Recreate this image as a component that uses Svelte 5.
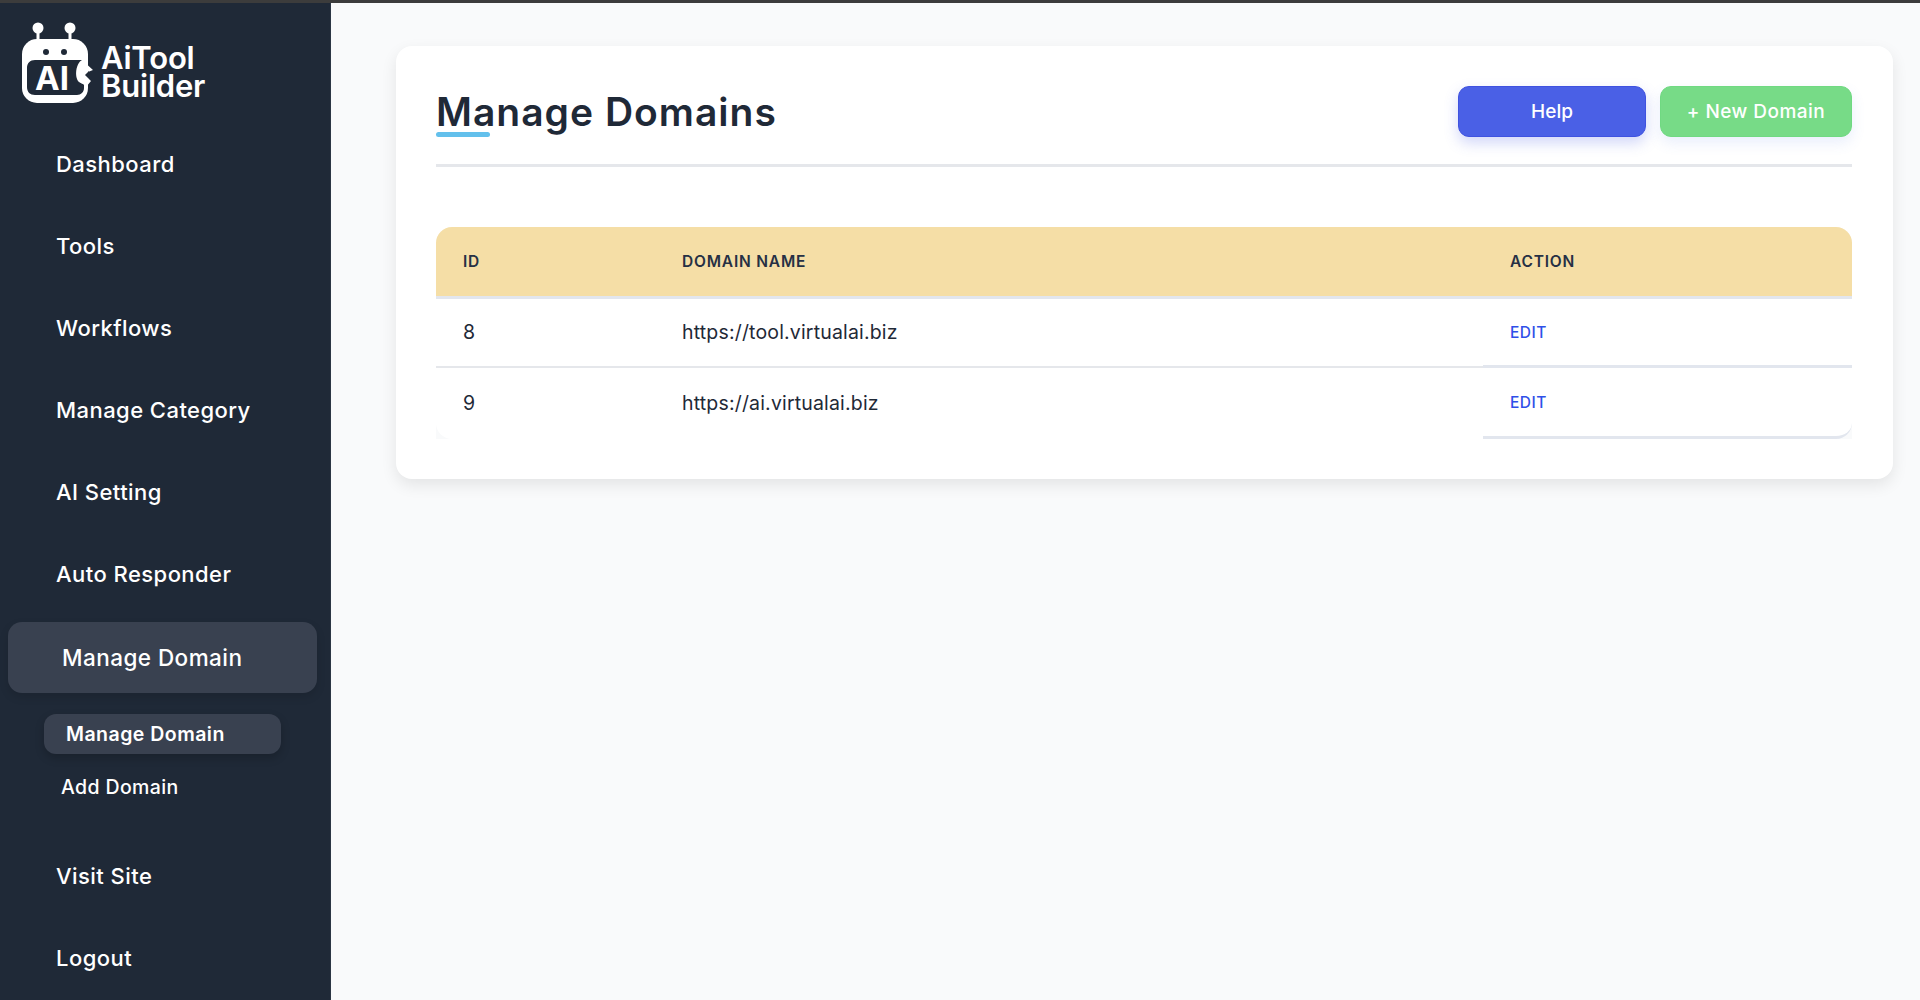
<script>
  const topNav = ['Dashboard', 'Tools', 'Workflows', 'Manage Category', 'AI Setting', 'Auto Responder'];
  const domains = [
    { id: 8, name: 'https://tool.virtualai.biz' },
    { id: 9, name: 'https://ai.virtualai.biz' }
  ];
</script>

<div class="page">
  <div class="topbar"></div>
  <div class="shell">
    <aside class="sidebar">
      <div class="brand">
        <svg class="mark" viewBox="0 0 74 80" width="74" height="80" aria-hidden="true">
          <circle cx="16" cy="5" r="5.5" fill="#fff" />
          <circle cx="48" cy="5" r="5.5" fill="#fff" />
          <rect x="14.5" y="7" width="3" height="12" fill="#fff" />
          <rect x="46.5" y="7" width="3" height="12" fill="#fff" />
          <rect x="0" y="16" width="66" height="64" rx="15" fill="#fff" />
          <circle cx="24" cy="29" r="3" fill="#1f2937" />
          <circle cx="42" cy="29" r="3" fill="#1f2937" />
          <path d="M13 37 H60 C54 40 52 54 57 59 C60 61 62 61 62 62 V65 C62 69 59 72 55 72 H13 C8 72 5 69 5 64 V45 C5 40 8 37 13 37 Z" fill="#1f2937" />
          <path d="M60 37 L71 47 L66 49 L66 37 Z" fill="#fff" />
          <path d="M67 48 L63 52 L67 56 Z" fill="#1f2937" />
          <path d="M66 55 L69 58 L64 64 L66 64 Z" fill="#fff" />
          <text x="13" y="67" class="mark-text">AI</text>
        </svg>
        <div class="brand-name">AiTool Builder</div>
      </div>
      <nav class="nav">
        {#each topNav as item}
          <a class="nav-item" href="#top">{item}</a>
        {/each}
        <a class="nav-active" href="#top">Manage Domain</a>
        <div class="subnav">
          <a class="sub-active" href="#top">Manage Domain</a>
          <a class="sub-item" href="#top">Add Domain</a>
        </div>
        <a class="nav-item" href="#top">Visit Site</a>
        <a class="nav-item" href="#top">Logout</a>
      </nav>
    </aside>
    <main class="main">
      <section class="card">
        <header class="head">
          <h1>Manage Domains</h1>
          <div class="actions">
            <button class="btn help">Help</button>
            <button class="btn add">+ New Domain</button>
          </div>
        </header>
        <div class="table-wrap">
          <table>
            <colgroup>
              <col class="c1" /><col class="c2" /><col class="c3" />
            </colgroup>
            <thead>
              <tr><th>ID</th><th>DOMAIN NAME</th><th>ACTION</th></tr>
            </thead>
            <tbody>
              {#each domains as d}
                <tr>
                  <td>{d.id}</td>
                  <td>{d.name}</td>
                  <td class="act"><a href="#top">EDIT</a></td>
                </tr>
              {/each}
            </tbody>
          </table>
        </div>
      </section>
    </main>
  </div>
</div>

<style>
  :global(body) {
    margin: 0;
    background: #f9fafb;
    font-family: Inter, "Liberation Sans", sans-serif;
  }
  .page {
    height: 1000px;
    overflow: hidden;
    display: flex;
    flex-direction: column;
  }
  .topbar {
    height: 3px;
    background: #3c3c3c;
    flex: none;
  }
  .shell {
    flex: 1;
    display: flex;
    min-height: 0;
  }
  .sidebar {
    width: 331px;
    flex: none;
    background: #1f2937;
    border-right: 1px solid #2c3644;
    box-sizing: border-box;
    color: #fff;
  }
  .brand {
    display: flex;
    align-items: flex-start;
    gap: 5px;
    padding: 20px 0 0 22px;
    height: 99px;
    box-sizing: border-box;
  }
  .mark {
    overflow: visible;
    flex: none;
  }
  .mark-text {
    font: 700 33px Inter, sans-serif;
    fill: #fff;
  }
  .brand-name {
    width: 112px;
    margin-top: 21px;
    font-size: 31px;
    font-weight: 600;
    line-height: 28px;
    letter-spacing: -0.2px;
  }
  .nav {
    display: flex;
    flex-direction: column;
    align-items: stretch;
    padding-top: 21px;
  }
  .nav-item {
    display: flex;
    align-items: center;
    height: 82px;
    padding-left: 56px;
    color: #fff;
    text-decoration: none;
    font-size: 22px;
    font-weight: 500;
    letter-spacing: 0.45px;
  }
  .nav-active {
    display: flex;
    align-items: center;
    height: 71px;
    margin: 7px 13px 0 8px;
    padding-left: 54px;
    border-radius: 14px;
    background: #394150;
    color: #fff;
    text-decoration: none;
    font-size: 22.5px;
    font-weight: 500;
    letter-spacing: 0.45px;
    box-shadow: 0 4px 10px rgba(0, 0, 0, 0.12);
  }
  .subnav {
    display: flex;
    flex-direction: column;
    align-items: flex-start;
    padding: 21px 0 28px 44px;
    gap: 13px;
  }
  .sub-active {
    width: 237px;
    height: 40px;
    box-sizing: border-box;
    display: flex;
    align-items: center;
    padding-left: 22px;
    border-radius: 12px;
    background: #394150;
    color: #fff;
    text-decoration: none;
    font-size: 19.5px;
    font-weight: 600;
    letter-spacing: 0.47px;
    box-shadow: 0 4px 10px rgba(0, 0, 0, 0.2);
  }
  .sub-item {
    height: 40px;
    display: flex;
    align-items: center;
    padding-left: 17px;
    color: #fff;
    text-decoration: none;
    font-size: 19.5px;
    font-weight: 500;
    letter-spacing: 0.37px;
  }
  .main {
    flex: 1;
    padding: 43px 27px 0 65px;
    min-width: 0;
  }
  .card {
    background: #fff;
    border-radius: 16px;
    padding: 40px 41px 40px 40px;
    box-shadow: 0 6px 16px rgba(0, 0, 0, 0.09);
  }
  .head {
    display: flex;
    justify-content: space-between;
    align-items: flex-start;
    height: 78px;
    border-bottom: 3px solid #e5e7eb;
    position: relative;
  }
  h1 {
    margin: 0;
    padding-top: 3px;
    font-size: 39px;
    line-height: 46px;
    font-weight: 600;
    letter-spacing: 1px;
    color: #1f2937;
    position: relative;
  }
  h1::after {
    content: "";
    position: absolute;
    left: 0;
    top: 46px;
    width: 54px;
    height: 5px;
    border-radius: 3px;
    background: #63c0ec;
  }
  .actions {
    display: flex;
    gap: 14px;
  }
  .btn {
    height: 51px;
    box-sizing: border-box;
    border-radius: 11px;
    font-family: inherit;
    font-size: 19px;
    font-weight: 500;
    color: #fff;
    padding: 0;
  }
  .help {
    width: 188px;
    background: #4a60e6;
    border: 1px solid #3f52e0;
    box-shadow: 0 6px 14px rgba(74, 96, 230, 0.25);
  }
  .add {
    width: 192px;
    background: #77db87;
    border: 1px solid #70d982;
    letter-spacing: 0.45px;
    box-shadow: 0 6px 14px rgba(80, 120, 230, 0.12);
  }
  .table-wrap {
    margin-top: 60px;
    border-radius: 16px 16px 0 0;
    overflow: hidden;
    background: #f9fafb;
  }
  table {
    width: 100%;
    table-layout: fixed;
    border-collapse: separate;
    border-spacing: 0;
  }
  .c1 { width: 219px; }
  .c3 { width: 369px; }
  th {
    height: 72px;
    padding: 0 27px;
    box-sizing: border-box;
    text-align: left;
    background: #f5dea6;
    color: #263044;
    font-size: 15.5px;
    font-weight: 600;
    letter-spacing: 0.8px;
    border-bottom: 3px solid #e2e6ee;
  }
  td {
    height: 69px;
    padding: 0 27px 2px;
    box-sizing: border-box;
    font-size: 19.5px;
    letter-spacing: 0.17px;
    color: #1f2937;
    background: #fff;
    border-bottom: 2px solid #e5e7eb;
  }
  tbody tr:last-child td {
    height: 71px;
    border-bottom: none;
  }
  tbody tr:last-child td:first-child {
    border-bottom-left-radius: 16px;
  }
  td.act,
  tbody tr:last-child td.act {
    border-bottom: 3px solid #e2e6ee;
  }
  tbody tr:last-child td.act {
    border-bottom-right-radius: 16px;
  }
  td a {
    color: #2f50e8;
    text-decoration: none;
    font-size: 15.5px;
    font-weight: 500;
    letter-spacing: 0.5px;
  }
</style>
